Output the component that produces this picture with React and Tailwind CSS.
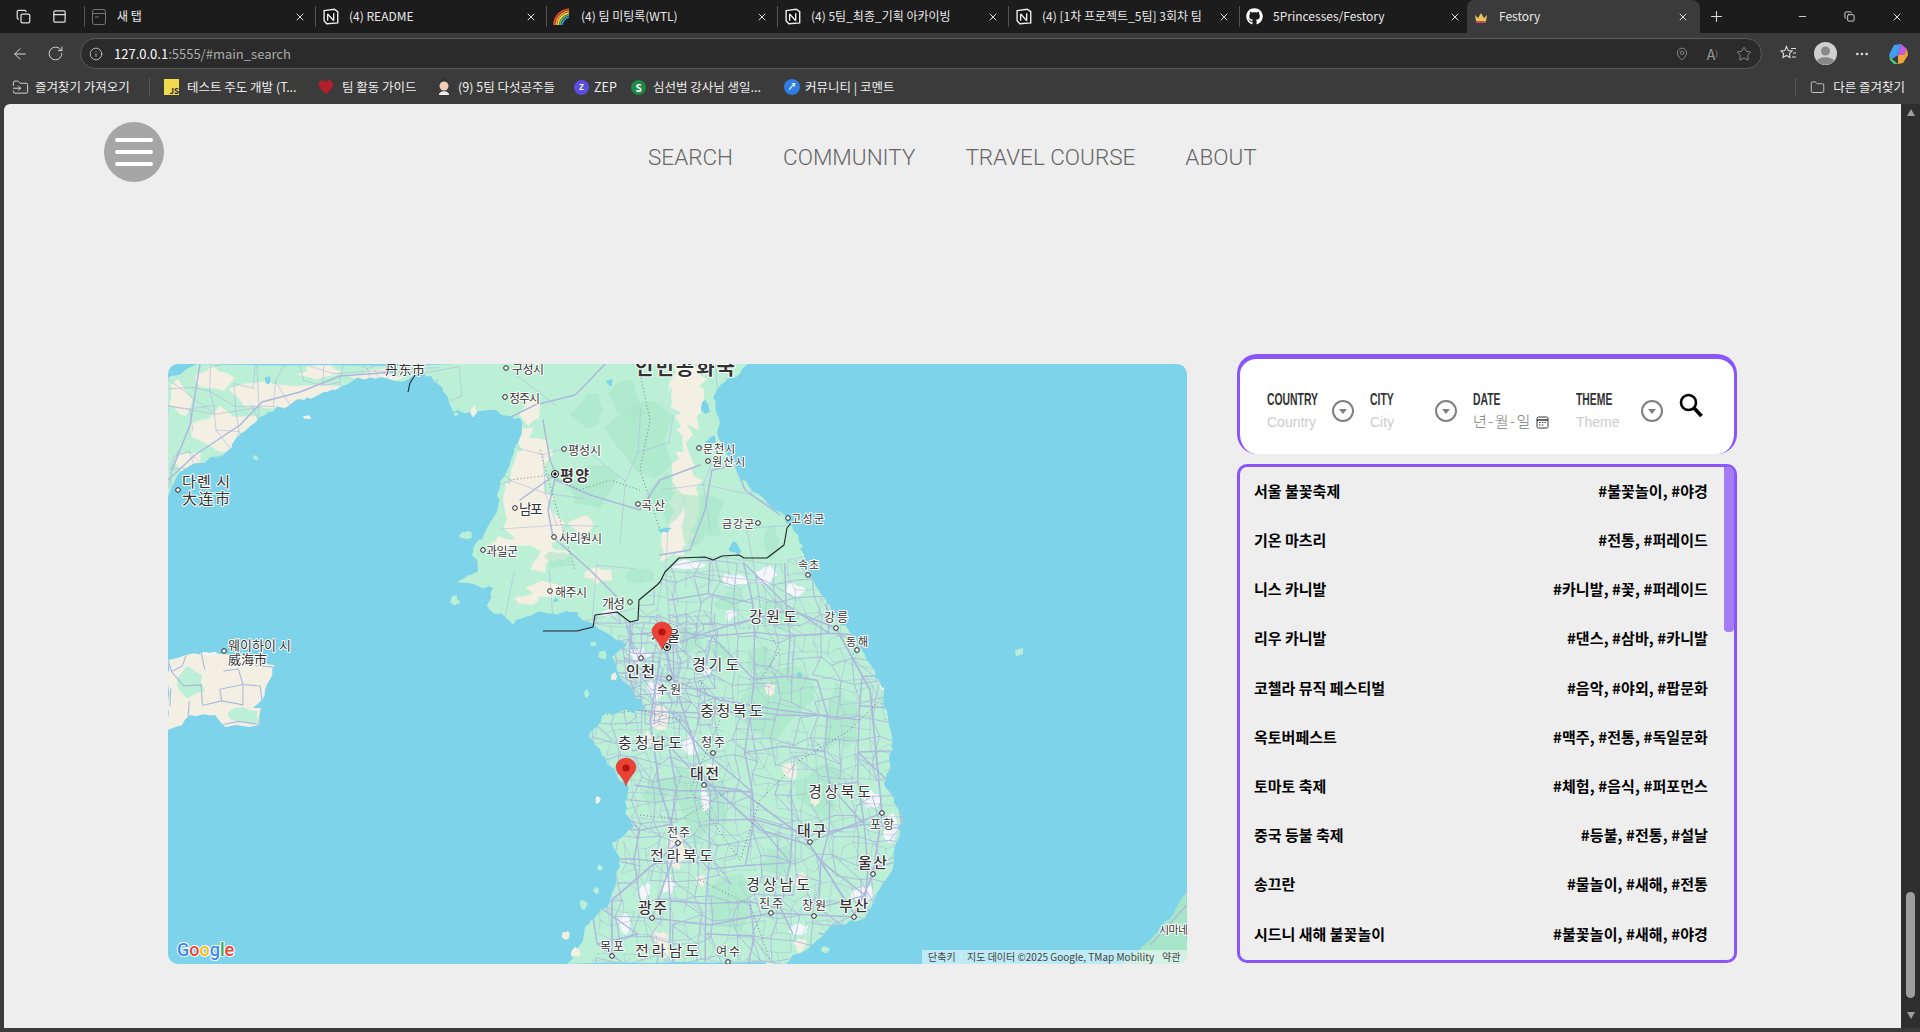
import React from "react";
import { ArrowLeft, RotateCw, Info, MapPin, Star, Plus, Minus, X, MoreHorizontal, Copy, PanelTop, Folder, FolderInput } from "lucide-react";
import { FaGithub } from "react-icons/fa";

const Notion = () => (
  <svg width="17" height="17" viewBox="0 0 16 16" className="shrink-0">
    <path d="M2 2.5 11.5 1.2 14.8 3.5V14L4.5 14.8 2 12Z" fill="#111" stroke="#f0f0f0" strokeWidth="1.3" />
    <path d="M5.3 5.5V12M5.3 5.5 11 12M11 5V12" stroke="#f0f0f0" strokeWidth="1.3" fill="none" />
  </svg>
);
const Rainbow = () => (
  <svg width="18" height="18" viewBox="0 0 18 18" className="shrink-0" fill="none" strokeWidth="1.7">
    <path d="M1 17C1 9 7 2 16 1" stroke="#e8463a" />
    <path d="M3 17C3 11 8 4 16 3" stroke="#f4a12e" />
    <path d="M5 17C5 12 9 6 16 5" stroke="#f7d94a" />
    <path d="M7 17C7 13 10 8 16 7" stroke="#5cb85c" />
    <path d="M9 17C9 14 12 10 16 9" stroke="#3f8fe0" />
  </svg>
);
const Crown = () => (
  <svg width="16" height="16" viewBox="0 0 16 16" className="shrink-0">
    <path d="M2 6 5 9 8 4 11 9 14 6 13 12H3Z" fill="#e8c25a" />
    <rect x="3" y="12" width="10" height="2" fill="#c84b5a" />
  </svg>
);
const NewTabIcon = () => (
  <svg width="16" height="18" viewBox="0 0 16 18" className="shrink-0" fill="none" stroke="#777" strokeWidth="1">
    <rect x="1.5" y="1.5" width="13" height="15" rx="2" />
    <path d="M1.5 5.5H14.5M4 9H8" />
  </svg>
);

const tabs = [
  { icon: <NewTabIcon />, label: "새 탭" },
  { icon: <Notion />, label: "(4) README" },
  { icon: <Rainbow />, label: "(4) 팀 미팅록(WTL)" },
  { icon: <Notion />, label: "(4) 5팀_최종_기획 아카이빙" },
  { icon: <Notion />, label: "(4) [1차 프로젝트_5팀] 3회차 팀" },
  { icon: <FaGithub className="text-white shrink-0" size={17} />, label: "5Princesses/Festory" },
];

function Chrome() {
  return (
    <>
      <div className="h-[33px] flex items-center bg-[#1c1c1c] text-[#e8e8e8] text-xs leading-[20px] shrink-0">
        <div className="w-[84px] shrink-0 flex items-center pl-[16px] gap-[21px]">
          <Copy size={15} className="text-[#ddd]" />
          <PanelTop size={15} className="text-[#ddd]" />
        </div>
        {tabs.map((t, i) => (
          <div key={i} className="w-[231px] h-[21px] shrink-0 flex items-center border-l border-[#555] pl-[6px] pr-[9px] gap-[10px]">
            {t.icon}
            <span className="flex-1 truncate whitespace-nowrap -mt-[2px]">{t.label}</span>
            <X size={12} className="text-[#ddd] shrink-0" />
          </div>
        ))}
        <div className="w-[233px] h-[33px] shrink-0 -ml-[3px] flex items-center bg-[#3b3b3b] rounded-t-lg pl-[6px] pr-[11px] gap-[10px]">
          <Crown />
          <span className="flex-1 whitespace-nowrap -mt-[2px]">Festory</span>
          <X size={12} className="text-[#ddd]" />
        </div>
        <Plus size={17} strokeWidth={1.5} className="ml-[8px] text-[#ddd]" />
        <div className="ml-auto flex items-center text-[#ddd] gap-[36px] pr-[17px]">
          <Minus size={11} />
          <Copy size={11} />
          <X size={12} />
        </div>
      </div>
      <div className="h-[37px] flex items-center bg-[#3b3b3b] shrink-0 text-[#ddd] pt-[4px]">
        <div className="w-[80px] shrink-0 flex items-center pl-[11px] gap-[18px]">
          <ArrowLeft size={18} strokeWidth={1.3} />
          <RotateCw size={17} strokeWidth={1.3} />
        </div>
        <div className="w-[1682px] h-[31px] shrink-0 flex items-center bg-[#2b2b2b] border border-[#5a5a5a] rounded-full pl-[8px] pr-[9px]">
          <Info size={14} strokeWidth={1.3} />
          <span className="ml-[11px] text-[13px] text-white">127.0.0.1<span className="text-[#aaa]">:5555/#main_search</span></span>
          <div className="ml-auto flex items-center gap-[18px] text-[#999]">
            <MapPin size={14} strokeWidth={1.3} className="-mr-[3px] -translate-x-[3px]" />
            <span className="text-[14px] leading-none">A<sup className="text-[8px]">)</sup></span>
            <Star size={16} strokeWidth={1.3} />
          </div>
        </div>
        <div className="flex items-center pl-[18px] gap-[17px]">
          <svg width="17" height="17" viewBox="0 0 17 17" className="shrink-0" fill="none" stroke="#ddd" strokeWidth="1.1">
            <path d="M6.5 1.5 8.2 5.6 12 6 9.5 8.4 10 12.5 6.5 10.5 3 12.5 3.6 8.4 1 6 4.8 5.6Z" />
            <path d="M11 3.5H16M13 8H16M12 12H16" />
          </svg>
          <svg width="23" height="23" viewBox="0 0 23 23" className="shrink-0">
            <circle cx="11.5" cy="11.5" r="11.5" fill="#d0d0d0" />
            <circle cx="11.5" cy="9" r="4.5" fill="#888" />
            <path d="M3 19C5 14 18 14 20 19 16 24 7 24 3 19Z" fill="#888" />
          </svg>
          <MoreHorizontal size={16} />
          <svg width="22" height="22" viewBox="0 0 22 22" className="shrink-0">
            <path d="M7 2 14 1 11 12 5 16 2 12Z" fill="#3fa0f0" />
            <path d="M14 1 20 6 17 12 11 12Z" fill="#c35ce0" />
            <path d="M2 12 5 16 11 21 7 21 3 17Z" fill="#4cd07a" />
            <path d="M17 12 20 6 21 12 16 20 11 21 11 12Z" fill="#f2a33c" />
          </svg>
        </div>
      </div>
      <div className="h-[34px] flex items-center bg-[#3b3b3b] shrink-0 text-[#eee] text-[12.5px] whitespace-nowrap pl-[12px] pr-[15px]">
        <FolderInput size={17} strokeWidth={1.2} />
        <span className="ml-[6px] w-[98px]">즐겨찾기 가져오기</span>
        <div className="ml-[16px] w-px h-[18px] bg-[#555]" />
        <div className="ml-[14px] w-[15px] h-[16px] bg-[#f0db4f] text-[#222] text-[8px] font-bold leading-none flex items-end justify-end">JS</div>
        <span className="ml-[8px] w-[111px]">테스트 주도 개발 (T...</span>
        <svg width="16" height="16" viewBox="0 0 16 16" className="ml-[20px] shrink-0"><path d="M8 15C2 10 0 7 1 4 3 0 7 1 8 4 9 1 13 0 15 4 16 7 14 10 8 15Z" fill="#b3202c" /></svg>
        <span className="ml-[8px] w-[76px]">팀 활동 가이드</span>
        <svg width="16" height="18" viewBox="0 0 16 18" className="ml-[18px] shrink-0"><circle cx="8" cy="4" r="3.5" fill="#333" /><circle cx="8" cy="8" r="4.5" fill="#f3cdb8" /><path d="M3 17C3 12 13 12 13 17Z" fill="#eee" /></svg>
        <span className="ml-[6px] w-[96px]">(9) 5팀 다섯공주들</span>
        <div className="ml-[20px] w-[15px] h-[15px] rounded-full bg-[#5b4ce0] text-white text-[8px] font-bold flex items-center justify-center">Z</div>
        <span className="ml-[5px] w-[37px]">ZEP</span>
        <div className="w-[15px] h-[15px] rounded-full bg-[#1d8a45] text-white text-[10px] font-bold flex items-center justify-center">S</div>
        <span className="ml-[7px] w-[111px]">심선범 강사님 생일...</span>
        <div className="ml-[20px] w-[16px] h-[16px] rounded-full bg-[#2f7de0] text-white text-[9px] font-bold flex items-center justify-center">↗</div>
        <span className="ml-[5px]">커뮤니티 | 코멘트</span>
        <div className="ml-auto w-px h-[18px] bg-[#555]" />
        <Folder size={15} strokeWidth={1.2} className="ml-[14px]" />
        <span className="ml-[8px]">다른 즐겨찾기</span>
      </div>
    </>
  );
}

/* --- map --- */
function rng(seed) {
  let s = seed;
  return () => {
    s = (s * 1664525 + 1013904223) % 4294967296;
    return s / 4294967296;
  };
}
function rough(points, amp, seed) {
  const r = rng(seed);
  const out = [];
  for (let i = 0; i < points.length; i++) {
    const [a, b] = points[i];
    const [c, d] = points[(i + 1) % points.length];
    out.push([a, b]);
    const n = Math.min(8, Math.floor(Math.hypot(c - a, d - b) / 5));
    for (let k = 1; k < n; k++) {
      const t = k / n;
      out.push([a + (c - a) * t + (r() - 0.5) * amp, b + (d - b) * t + (r() - 0.5) * amp]);
    }
  }
  return out.map((p) => p.map((v) => v.toFixed(1)).join(",")).join(" ");
}
function blob(x, y, a, b, seed) {
  const r = rng(seed * 31 + 11);
  const pts = [];
  const n = 11;
  for (let i = 0; i < n; i++) {
    const t = (i / n) * Math.PI * 2;
    const k = 0.55 + r() * 0.65;
    pts.push((x + Math.cos(t) * a * k).toFixed(1) + "," + (y + Math.sin(t) * b * k).toFixed(1));
  }
  return pts.join(" ");
}
function mesh(x0, y0, x1, y1, step, jit, p, seed) {
  const r = rng(seed);
  const cols = Math.ceil((x1 - x0) / step);
  const rows2 = Math.ceil((y1 - y0) / step);
  const nodes = [];
  for (let j = 0; j <= rows2; j++) {
    const line = [];
    for (let i = 0; i <= cols; i++) {
      line.push([(x0 + i * step + (r() - 0.5) * jit).toFixed(1), (y0 + j * step + (r() - 0.5) * jit).toFixed(1)]);
    }
    nodes.push(line);
  }
  let d = "";
  for (let j = 0; j <= rows2; j++) {
    for (let i = 0; i <= cols; i++) {
      const n = nodes[j][i];
      if (i < cols && r() < p) d += `M${n[0]} ${n[1]}L${nodes[j][i + 1][0]} ${nodes[j][i + 1][1]}`;
      if (j < rows2 && r() < p) d += `M${n[0]} ${n[1]}L${nodes[j + 1][i][0]} ${nodes[j + 1][i][1]}`;
      if (i < cols && j < rows2 && r() < p * 0.25) d += `M${n[0]} ${n[1]}L${nodes[j + 1][i + 1][0]} ${nodes[j + 1][i + 1][1]}`;
    }
  }
  return d;
}

const LAND = [[168,378],[197,364],[748,364],[725,382],[713,398],[719,418],[717,432],[736,468],[753,492],[780,512],[798,535],[805,562],[815,585],[832,612],[853,635],[863,652],[879,680],[888,717],[893,750],[884,783],[902,817],[895,847],[893,867],[879,890],[866,917],[830,927],[817,940],[790,960],[786,964],[567,964],[576,950],[585,927],[607,907],[616,883],[620,857],[612,843],[634,827],[625,813],[629,787],[607,763],[589,737],[607,713],[647,710],[625,683],[612,657],[627,645],[610,635],[590,622],[570,612],[537,612],[513,625],[487,605],[493,588],[457,582],[477,572],[473,552],[487,528],[497,512],[500,488],[510,465],[520,438],[520,418],[490,410],[470,412],[453,412],[443,388],[423,372],[407,380],[360,378],[327,392],[293,402],[260,417],[243,432],[223,455],[180,472],[168,498]];
const SHANDONG = [[168,660],[185,655],[215,652],[230,655],[275,665],[265,690],[262,700],[253,708],[262,708],[260,725],[250,727],[235,725],[225,727],[215,715],[190,715],[182,725],[168,730]];
const JAPAN = [[1187,892],[1187,964],[1122,964],[1150,940],[1175,910]];
const SOUTH = [[590,622],[595,615],[617,612],[630,622],[638,620],[639,600],[657,585],[665,572],[679,558],[705,557],[739,555],[767,558],[784,545],[800,530],[910,650],[910,964],[560,964],[580,700]];

const ROADS_FINE = mesh(596, 560, 905, 964, 13, 9, 0.62, 3);
const ROADS_THIN = mesh(596, 560, 905, 964, 20, 12, 0.72, 7);
const ROADS_THICK = mesh(596, 560, 905, 964, 38, 14, 0.62, 19);
const ROADS_SEOUL = mesh(625, 615, 712, 715, 9, 6, 0.72, 23);
const ROADS_NORTH = mesh(168, 364, 830, 600, 42, 22, 0.42, 41);
const ROADS_CHINA = mesh(168, 364, 420, 500, 22, 12, 0.55, 51);
const ROADS_SHAN = mesh(168, 650, 275, 730, 18, 8, 0.6, 61);

const HIGHWAYS = [
  "M665 650 L680 700 L705 780 L760 830 L810 845 L855 915",
  "M660 660 L650 720 L660 790 L678 843 L652 918",
  "M670 645 L730 625 L790 610 L836 628",
  "M652 918 L710 925 L771 913 L854 917",
  "M704 785 L740 790 L810 842 L882 813",
  "M836 628 L870 690 L882 813 L873 874 L854 917",
  "M669 678 L720 700 L780 710 L860 720",
  "M678 843 L612 900 L612 956",
];
const NORTH_ROADS = [
  "M168 480 L195 455 L240 425 L262 402 L300 392 L340 376 L395 372",
  "M172 470 L190 425 L200 364",
  "M505 420 L535 405 L575 395 L590 380 L605 364",
  "M543 420 L550 460 L556 474 L548 510 L553 537 L590 570 L620 600",
  "M556 480 L590 495 L640 510 L660 480 L700 465",
  "M712 470 L705 510 L690 550 L660 555",
  "M712 470 L735 465 L745 490 L780 515",
  "M520 500 L556 474",
];
const DOTTED = [
  "M638 364 L650 420 L640 470 L660 530", "M510 480 L550 475 L580 490 L610 480 L640 490", "M540 450 L560 520 L575 570",
  "M700 680 L720 720 L690 790 L740 860 L760 800 L800 760 L850 730 L880 700", "M600 715 L640 710 L680 720", "M640 815 L680 820 L730 790",
  "M760 620 L780 650 L760 680", "M600 770 L575 760", "M700 880 L750 905 L770 960",
];

const MINT = "#bbefd6";
const BEIGE = "#f3efe2";
const BLOBS = [
  [590, 490, 30, 22], [640, 440, 34, 40], [700, 520, 24, 30], [772, 540, 9, 22], [670, 500, 20, 24], [590, 410, 18, 16], [625, 400, 18, 22],
  [560, 560, 14, 10], [640, 575, 18, 10], [780, 615, 26, 16], [730, 600, 16, 10], [780, 700, 42, 40], [700, 800, 30, 40], [840, 720, 20, 35],
  [730, 905, 24, 30], [820, 790, 24, 30], [660, 790, 16, 16], [690, 640, 14, 12], [720, 650, 12, 10], [760, 660, 16, 14], [660, 740, 12, 12],
  [780, 860, 22, 18],
];
const BEIGE_BIG = [
  [[522,425],[548,440],[545,490],[560,520],[565,560],[530,570],[510,540],[505,490],[515,460]],
  [[672,364],[700,364],[704,400],[688,440],[700,500],[685,555],[660,560],[672,500],[682,440],[672,400]],
];
const NK_BEIGE = [[580, 525, 14, 10], [545, 590, 18, 8], [500, 545, 12, 9], [598, 575, 14, 9], [530, 410, 10, 14], [525, 600, 14, 6]];
const NK_MINT = [[520, 560, 22, 14], [495, 580, 18, 6], [560, 545, 10, 8]];
const CHINA_BEIGE = [[300, 395, 50, 14], [225, 430, 32, 22], [190, 465, 22, 12], [375, 378, 30, 10], [260, 395, 28, 18], [180, 400, 12, 18], [215, 378, 20, 12], [320, 372, 22, 8]];
const WHITE = [
  [735, 580, 13, 7], [687, 565, 18, 5], [795, 590, 10, 7], [765, 575, 11, 9], [730, 615, 6, 6], [884, 680, 7, 18], [872, 800, 8, 10], [890, 830, 7, 16],
  [862, 895, 11, 11], [640, 655, 11, 9], [705, 800, 5, 12], [706, 670, 5, 5], [668, 885, 6, 10], [610, 613, 9, 5], [625, 925, 8, 12], [672, 640, 9, 7],
  [690, 745, 9, 10], [655, 690, 8, 10], [645, 890, 7, 9], [800, 930, 10, 7],
];
const BEIGE_S = [
  [660, 715, 12, 14], [648, 740, 7, 9], [675, 855, 13, 20], [712, 770, 7, 7], [790, 770, 8, 10], [815, 800, 5, 8], [800, 880, 7, 7], [800, 945, 7, 7], [660, 945, 9, 16], [700, 880, 5, 7], [770, 690, 5, 8],
];
const LAKES = [[665, 530, 7, 3], [735, 548, 7, 6], [706, 408, 5, 8], [712, 440, 6, 4], [268, 380, 4, 4], [610, 382, 4, 4], [556, 600, 3, 2], [800, 675, 3, 3]];
const ISLES = [
  [614, 676, 4, 4], [587, 694, 3, 4], [593, 926, 4, 6], [576, 952, 5, 6], [603, 655, 4, 5], [593, 644, 4, 3], [598, 800, 3, 4],
  [584, 905, 4, 5], [596, 890, 3, 4], [566, 935, 4, 4], [612, 980, 4, 4], [825, 950, 5, 4], [770, 965, 4, 3], [465, 535, 7, 4], [455, 601, 5, 5],
  [474, 411, 3, 6], [456, 414, 3, 2], [256, 458, 3, 3], [307, 417, 4, 2], [600, 868, 3, 3], [607, 940, 3, 3],
];

const L = [
  ["丹东市", 385, 368, 13, 40], ["구성시", 512, 368, 12, 32], ["정주시", 509, 397, 12, 31], ["평성시", 568, 449, 12, 33],
  ["평양", 560, 474, 15, 29, 700], ["남포", 519, 508, 14, 24], ["곡산", 641, 504, 12, 24], ["사리원시", 559, 537, 12, 43],
  ["과일군", 486, 550, 12, 32], ["해주시", 555, 591, 12, 32], ["개성", 602, 602, 13, 23], ["다롄 시", 182, 480, 15, 48],
  ["大连市", 182, 497, 15, 48], ["웨이하이 시", 228, 644, 13, 63], ["威海市", 228, 658, 13, 39], ["문천시", 703, 448, 11, 32],
  ["원산시", 712, 461, 11, 33], ["고성군", 791, 518, 11, 33], ["금강군", 722, 523, 11, 32], ["속초", 798, 564, 11, 21],
  ["강원도", 749, 615, 15, 48], ["강릉", 824, 616, 12, 24], ["동해", 846, 641, 11, 22], ["서울", 651, 635, 14, 29, 500],
  ["인천", 626, 670, 15, 29, 500], ["경기도", 692, 663, 15, 47], ["수원", 657, 688, 12, 24], ["충청북도", 700, 709, 15, 63],
  ["충청남도", 618, 741, 15, 64], ["청주", 701, 741, 12, 24], ["대전", 690, 772, 15, 29, 500], ["경상북도", 808, 790, 15, 63],
  ["포항", 870, 823, 12, 24], ["대구", 797, 829, 15, 29, 500], ["전주", 667, 831, 12, 23], ["전라북도", 650, 854, 15, 63],
  ["울산", 858, 861, 15, 29, 500], ["경상남도", 746, 883, 15, 64], ["광주", 638, 906, 15, 29, 500], ["진주", 759, 902, 12, 24],
  ["창원", 802, 904, 12, 24], ["부산", 839, 904, 15, 29, 500], ["목포", 600, 945, 12, 24], ["전라남도", 635, 949, 15, 64],
  ["여수", 716, 950, 12, 24], ["시마네", 1159, 929, 11, 29], ["인민공화국", 635, 366, 20, 100, 700],
];
const DOTS = [
  [506, 368], [505, 397], [564, 449], [515, 508], [638, 504], [554, 537], [483, 550], [550, 591], [630, 602], [178, 490], [224, 651],
  [699, 448], [708, 461], [788, 518], [758, 523], [808, 575], [836, 628], [857, 650], [641, 658], [669, 678], [713, 753], [704, 785],
  [882, 813], [810, 842], [678, 843], [873, 874], [652, 918], [771, 913], [814, 916], [854, 917], [612, 956], [728, 962],
];

const Pin = ({ x, y }) => (
  <g transform={`translate(${x} ${y})`}>
    <path d="M0 28C-2 20-10 15-10 9.5A10 9.5 0 0 1 10 9.5C10 15 2 20 0 28Z" fill="#ea4335" stroke="#d8322a" strokeWidth=".5" />
    <circle cx="0" cy="10" r="3.6" fill="#b31412" />
  </g>
);

function MapView() {
  const land = rough(LAND, 5, 3);
  const shan = rough(SHANDONG, 3, 5);
  return (
    <div className="relative mt-[10px] w-[1019px] h-[600px] shrink-0 rounded-[10px] overflow-hidden bg-[#7dd4ea]">
      <svg viewBox="168 364 1019 600" width="1019" height="600" className="block font-['Noto_Sans_CJK_KR',sans-serif]">
        <defs>
          <clipPath id="landClip"><polygon points={land} /></clipPath>
          <clipPath id="southClip"><polygon points={SOUTH.map((p) => p.join(",")).join(" ")} /></clipPath>
          <clipPath id="shanClip"><polygon points={shan} /></clipPath>
        </defs>
        <polygon points={land} fill={MINT} />
        <polygon points={shan} fill={BEIGE} />
        <polygon points={rough(JAPAN, 3, 9)} fill="#a7e5c8" />
        {ISLES.map(([x, y, a, b], i) => <polygon key={i} points={blob(x, y, a, b, 600 + i)} fill={i % 3 === 0 ? BEIGE : MINT} />)}
        <g clipPath="url(#landClip)">
          {BEIGE_BIG.map((p, i) => <polygon key={i} points={rough(p, 12, 70 + i)} fill={BEIGE} />)}
          {CHINA_BEIGE.map(([x, y, a, b], i) => <polygon key={i} points={blob(x, y, a, b, 200 + i)} fill={BEIGE} />)}
          {NK_BEIGE.map(([x, y, a, b], i) => <polygon key={i} points={blob(x, y, a, b, 700 + i)} fill={BEIGE} />)}
          {NK_MINT.map(([x, y, a, b], i) => <polygon key={i} points={blob(x, y, a, b, 750 + i)} fill={MINT} />)}
          {BLOBS.map(([x, y, a, b], i) => <polygon key={i} points={blob(x, y, a, b, i + 1)} fill="#a8e6c8" opacity=".6" />)}
          {BEIGE_S.map(([x, y, a, b], i) => <polygon key={i} points={blob(x, y, a, b, 100 + i)} fill={BEIGE} />)}
          {WHITE.map(([x, y, a, b], i) => <polygon key={i} points={blob(x, y, a, b, 300 + i)} fill="#f4f6fb" />)}
          {LAKES.map(([x, y, a, b], i) => <polygon key={i} points={blob(x, y, a, b, 400 + i)} fill="#7dd4ea" />)}
          <g fill="none" stroke="#adb9dc" strokeLinejoin="round" strokeLinecap="round">
            <path d={ROADS_CHINA} strokeWidth=".7" opacity=".85" />
            <path d={ROADS_NORTH} strokeWidth=".8" opacity=".7" />
            {NORTH_ROADS.map((d, i) => <path key={i} d={d} strokeWidth="1.5" />)}
            <g clipPath="url(#southClip)">
              <path d={ROADS_FINE} strokeWidth=".6" opacity=".8" />
              <path d={ROADS_THIN} strokeWidth=".9" />
              <path d={ROADS_THICK} strokeWidth="1.4" />
              {HIGHWAYS.map((d, i) => <path key={i} d={d} strokeWidth="1.7" />)}
              <path d={ROADS_SEOUL} strokeWidth="1" />
            </g>
          </g>
          <g fill="none" stroke="#667" strokeWidth=".8" strokeDasharray="1 2.5">
            {DOTTED.map((d, i) => <path key={i} d={d} />)}
          </g>
        </g>
        <g clipPath="url(#shanClip)">
          <polygon points={blob(190, 682, 15, 14, 501)} fill={MINT} />
          <polygon points={blob(245, 716, 16, 9, 502)} fill={MINT} />
          <polygon points={blob(215, 650, 18, 6, 503)} fill="#f4f6fb" />
          <path d={ROADS_SHAN} fill="none" stroke="#adb9dc" strokeWidth="1.1" />
        </g>
        <path d="M1150 945 L1187 905" fill="none" stroke="#adb9dc" strokeWidth="1.4" />
        <polygon points="1015,650 1023,648 1023,654 1016,656" fill={MINT} />
        <polyline points="543,631 577,631 593,627 595,615 617,612 630,622 638,620 639,600 657,585 660,582 665,572 679,558 705,557 713,560 722,556 739,555 744,558 767,558 784,545 787,528 791,523" fill="none" stroke="#222" strokeWidth="1.1" strokeLinejoin="round" />
        <polyline points="415,375 410,383 408,392" fill="none" stroke="#222" strokeWidth="1.1" />
        {L.map(([t, x, y, size, w, weight], i) => (
          <text key={i} x={x} y={y} fontSize={size} fontWeight={weight || 400} dominantBaseline="central" textLength={w} lengthAdjust="spacing" fill="#333" stroke="#fff" strokeWidth="2" strokeLinejoin="round" className="[paint-order:stroke]">{t}</text>
        ))}
        {DOTS.map(([x, y], i) => <circle key={i} cx={x} cy={y} r="2.3" fill="#fff" stroke="#222" strokeWidth="1" />)}
        <circle cx="555" cy="474" r="3.5" fill="#fff" stroke="#111" strokeWidth="1" /><circle cx="555" cy="474" r="1.7" fill="#111" />
        <circle cx="667" cy="647" r="3.5" fill="#fff" stroke="#111" strokeWidth="1" /><circle cx="667" cy="647" r="1.7" fill="#111" />
        <Pin x={662} y={622} />
        <Pin x={626} y={758} />
        <text x="177" y="956" fontSize="18" fontFamily="Roboto, sans-serif" fontWeight="500" stroke="#fff" strokeWidth="2" strokeLinejoin="round" className="[paint-order:stroke]">
          <tspan fill="#4285f4">G</tspan><tspan fill="#ea4335">o</tspan><tspan fill="#fbbc05">o</tspan><tspan fill="#4285f4">g</tspan><tspan fill="#34a853">l</tspan><tspan fill="#ea4335">e</tspan>
        </text>
      </svg>
      <div className="absolute right-0 bottom-0 w-[265px] h-[14px] flex items-center bg-white/50 text-[#444] text-[10px] leading-none whitespace-nowrap font-['Noto_Sans_CJK_KR',sans-serif]">
        <span className="w-[39px] pl-[6px]">단축키</span>
        <div className="w-px h-[14px] bg-[#cfeef5]" />
        <span className="w-[194px] pl-[5px]">지도 데이터 ©2025 Google, TMap Mobility</span>
        <div className="w-px h-[14px] bg-[#cfeef5]" />
        <span className="pl-[5px]">약관</span>
      </div>
    </div>
  );
}

const fields = [
  ["COUNTRY", "Country"],
  ["CITY", "City"],
  ["DATE", null],
  ["THEME", "Theme"],
];

function SearchBar() {
  return (
    <div className="h-[100px] bg-white border-t-[5px] border-x-[3px] border-b-0 border-[#8a55fb] rounded-[20px] flex items-start pl-[27px] pt-[30px]">
      {fields.map(([label, ph]) => (
        <div key={label} className="w-[103px] shrink-0 flex">
          <div className="w-[64px] shrink-0">
            <div className="font-['Liberation_Sans',sans-serif] font-bold text-[16.5px] leading-[20px] text-[#333] origin-left scale-x-[0.63] whitespace-nowrap">{label}</div>
            {ph ? (
              <div className="mt-[3px] text-[14px] leading-[20px] text-[#ccc] font-['Liberation_Sans',sans-serif]">{ph}</div>
            ) : (
              <div className="mt-[2px] flex items-center leading-[20px] whitespace-nowrap text-[#777] text-[15px] tracking-[1.5px] font-light font-['Noto_Sans_CJK_KR',sans-serif]">
                년-월-일
                <svg width="13" height="13" viewBox="0 0 13 13" className="ml-[4px] mt-[2px] shrink-0" fill="none" stroke="#333">
                  <rect x="1" y="1" width="11" height="11" rx="1.5" />
                  <path d="M1 4H12" strokeWidth="1.5" />
                  <path d="M3 6.5H4.5M5.8 6.5H7.3M8.6 6.5H10M3 9H4.5M5.8 9H7.3" />
                </svg>
              </div>
            )}
          </div>
          {ph && (
            <div className="mt-[11px] ml-[1px] w-[22px] h-[22px] rounded-full border-2 border-[#808080] flex items-center justify-center">
              <svg width="8" height="5" viewBox="0 0 8 5"><path d="M0 0H8L4 5Z" fill="#808080" /></svg>
            </div>
          )}
        </div>
      ))}
      <svg width="24" height="25" viewBox="0 0 24 25" className="shrink-0 mt-[4px]" fill="none" stroke="#000">
        <circle cx="9.5" cy="9.5" r="7.5" strokeWidth="2.6" />
        <path d="M15 15 22.5 23" strokeWidth="3.6" />
      </svg>
    </div>
  );
}

const rows = [
  ["서울 불꽃축제", "#불꽃놀이, #야경"],
  ["기온 마츠리", "#전통, #퍼레이드"],
  ["니스 카니발", "#카니발, #꽃, #퍼레이드"],
  ["리우 카니발", "#댄스, #삼바, #카니발"],
  ["코첼라 뮤직 페스티벌", "#음악, #야외, #팝문화"],
  ["옥토버페스트", "#맥주, #전통, #독일문화"],
  ["토마토 축제", "#체험, #음식, #퍼포먼스"],
  ["중국 등불 축제", "#등불, #전통, #설날"],
  ["송끄란", "#물놀이, #새해, #전통"],
  ["시드니 새해 불꽃놀이", "#불꽃놀이, #새해, #야경"],
];

function List() {
  return (
    <div className="mt-[10px] h-[499px] border-[3px] border-[#8a55fb] rounded-[10px] flex bg-[#eeeeee] overflow-hidden">
      <div className="flex-1 pl-[14px] pr-[16px] -mt-[0.5px] font-['Noto_Sans_CJK_KR',sans-serif] font-bold text-[15px] text-black">
        {rows.map(([a, b]) => (
          <div key={a} className="h-[49.2px] flex items-center justify-between whitespace-nowrap">
            <span>{a}</span>
            <span className="tracking-[0.1px]">{b}</span>
          </div>
        ))}
      </div>
      <div className="w-[10px] h-[165px] shrink-0 bg-[#a47cf6] rounded-b-sm" />
    </div>
  );
}

export default function App() {
  return (
    <div className="w-[1920px] h-[1032px] bg-[#3b3b3b] flex flex-col overflow-hidden font-['Noto_Sans_CJK_KR',sans-serif]">
      <Chrome />
      <div className="flex-1 min-h-0 flex pl-1 pb-1">
        <div className="w-[1897px] shrink-0 bg-[#eeeeee] rounded-tl-md">
          <header className="flex items-start pl-[100px] pt-[18px] h-[250px]">
            <div className="w-[60px] h-[60px] rounded-full bg-[#a6a6a6] flex flex-col items-center justify-center gap-[8px] shrink-0">
              <div className="w-[38px] h-[4px] rounded-sm bg-white" />
              <div className="w-[38px] h-[4px] rounded-sm bg-white" />
              <div className="w-[38px] h-[4px] rounded-sm bg-white" />
            </div>
            <nav className="ml-[484px] mt-[20px] flex gap-[50px] font-['Roboto',sans-serif] font-light text-[22.5px] leading-[30px] text-[#666] whitespace-nowrap">
              <span>SEARCH</span>
              <span>COMMUNITY</span>
              <span>TRAVEL COURSE</span>
              <span>ABOUT</span>
            </nav>
          </header>
          <main className="flex items-start pl-[164px]">
            <MapView />
            <div className="ml-[50px] w-[500px] shrink-0">
              <SearchBar />
              <List />
            </div>
          </main>
        </div>
        <div className="flex-1 bg-[#2e2e2e] flex flex-col items-center">
          <div className="mt-[5px] w-0 h-0 border-x-[4px] border-x-transparent border-b-[7px] border-b-[#9e9e9e]" />
          <div className="mt-[776px] w-[9px] h-[106px] rounded-full bg-[#9e9e9e]" />
          <div className="mt-[14px] w-0 h-0 border-x-[4px] border-x-transparent border-t-[7px] border-t-[#9e9e9e]" />
        </div>
      </div>
    </div>
  );
}
